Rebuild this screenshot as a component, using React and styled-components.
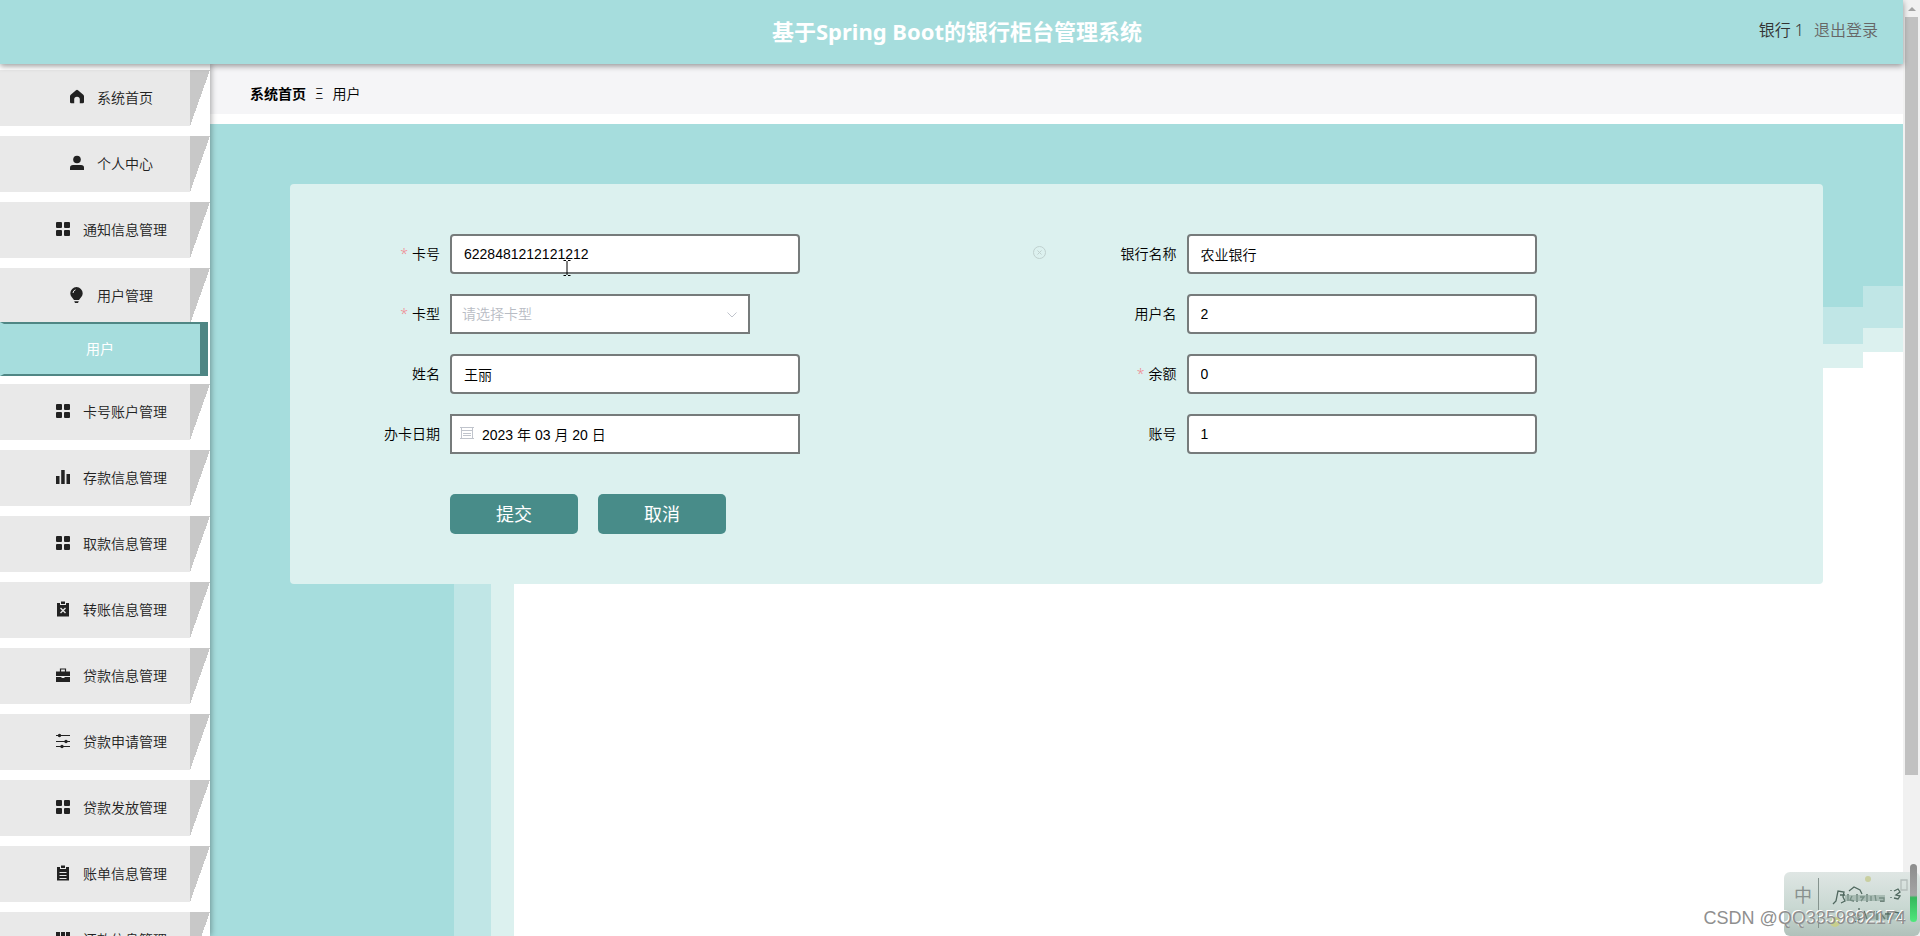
import React from 'react'
import styled, { createGlobalStyle, css } from 'styled-components'

const TEAL = '#a6dddd'
const TEAL_MID = '#c0e6e6'
const TEAL_LIGHT = '#dcf1ef'

const GlobalStyle = createGlobalStyle`
  * {
    box-sizing: border-box;
  }
  body {
    margin: 0;
    background: #fff;
    color: #000;
    font-family: "Noto Sans", "Noto Sans CJK SC", sans-serif;
    font-size: 14px;
    font-weight: 350;
  }
`;

const Screen = styled.div`
  position: relative;
  display: flex;
  height: 100vh;
  overflow: hidden;
`;

const Page = styled.div`
  flex: 1;
  min-width: 0;
  display: flex;
  flex-direction: column;
`;

const Header = styled.header`
  position: relative;
  z-index: 2;
  flex: none;
  height: 64px;
  padding: 0 25px 0 36px;
  display: grid;
  grid-template-columns: 1fr auto 1fr;
  align-items: center;
  background: ${TEAL};
  box-shadow: 0 2px 6px rgba(0, 0, 0, 0.4);
`;

const Title = styled.h1`
  grid-column: 2;
  margin: 0;
  color: #fff;
  font-size: 22px;
  line-height: 62px;
  height: 64px;
  font-weight: bold;
`;

const Account = styled.div`
  display: flex;
  justify-content: flex-end;
  gap: 10px;
  font-size: 16px;
  line-height: 60px;
  height: 64px;
  color: #333;
`;

const Logout = styled.a`
  color: #666;
  text-decoration: none;
`;

const Body = styled.div`
  flex: 1;
  min-height: 0;
  display: flex;
`;

const Sidebar = styled.nav`
  position: relative;
  z-index: 1;
  flex: none;
  width: 210px;
  padding-top: 6px;
  background: #fff;
  box-shadow: 1px 0 6px rgba(0, 0, 0, 0.35);
`;

const MenuList = styled.ul`
  margin: 0;
  padding: 0;
  list-style: none;
  display: flex;
  flex-direction: column;
  gap: 10px;
`;

const MenuLink = styled.a`
  display: flex;
  align-items: center;
  justify-content: center;
  gap: 13px;
  height: 56px;
  padding: 0 0 2px 13px;
  color: #222;
  text-decoration: none;
  background:
    linear-gradient(to bottom right, #c8c8c8 50%, #fff 50%) right / 20px 100% no-repeat,
    #e9e9e9;
`;

const SubLink = styled.a`
  display: block;
  width: 208px;
  height: 54px;
  margin: -2px 0 -2px;
  padding-right: 4px;
  border: 2px solid #4f8684;
  border-right-width: 8px;
  border-left: 4px solid ${TEAL};
  background: ${TEAL};
  color: #fff;
  font-weight: 400;
  line-height: 50px;
  text-align: center;
  text-decoration: none;
`;

const Main = styled.main`
  flex: 1;
  min-width: 0;
  display: flex;
  flex-direction: column;
`;

const Breadcrumb = styled.div`
  flex: none;
  display: flex;
  align-items: center;
  gap: 9px;
  height: 50px;
  margin-bottom: 10px;
  padding: 8px 40px 0;
  background: #f5f5f7;
`;

const Current = styled.b`
  font-weight: 600;
`;

const steps = (a, b, c) => css`linear-gradient(to bottom, ${TEAL} ${a}px, ${TEAL_MID} ${a}px ${b}px, ${TEAL_LIGHT} ${b}px ${c}px, #fff ${c}px)`

const Content = styled.div`
  flex: 1;
  padding: 60px 80px;
  background:
    ${steps(162, 204, 228)} right top / 40px 100% no-repeat,
    ${steps(183, 220, 244)} right 40px top / 40px 100% no-repeat,
    linear-gradient(${TEAL}, ${TEAL}) left top / 100% 80px no-repeat,
    linear-gradient(to right, ${TEAL} 244px, ${TEAL_MID} 244px 281px, ${TEAL_LIGHT} 281px 304px, #fff 304px);
`;

const Form = styled.form`
  padding: 50px 30px;
  border-radius: 4px;
  background: ${TEAL_LIGHT};
`;

const Fields = styled.div`
  display: grid;
  grid-template-columns: 1fr 1fr;
  row-gap: 20px;
`;

const Field = styled.div`
  display: flex;
  align-items: center;
  height: 40px;
`;

const Label = styled.label`
  flex: none;
  width: 130px;
  padding-right: 10px;
  text-align: right;
  line-height: 40px;
`;

const Star = styled.span`
  color: #f08a90;
  margin-right: 4px;
`;

const Control = styled.div`
  position: relative;
  flex: 1;
  height: 40px;
`;

const boxStyle = css`
  height: 40px;
  border: 2px solid #767b7b;
  background: #fff;
  color: #000;
  font-family: "Liberation Sans", "Noto Sans CJK SC", sans-serif;
  font-size: 14px;
  font-weight: inherit;
  outline: none;
`;

const Input = styled.input`
  ${boxStyle}
  width: 350px;
  padding: 0 12px;
  border-radius: 4px;
  ${props => props.$date && 'padding-left: 30px; border-radius: 0;'}
`;

const Select = styled.select`
  ${boxStyle}
  width: 300px;
  padding: 0 10px;
  border-radius: 0;
  appearance: none;
  color: #b8bcc4;
`;

const IconSpot = styled.span`
  position: absolute;
  top: 12px;
  left: ${props => props.$left};
  right: ${props => props.$right};
  display: flex;
  color: #c0c4cc;
  pointer-events: none;
`;

const Buttons = styled.div`
  display: flex;
  gap: 20px;
  margin-top: 40px;
  padding-left: 130px;
`;

const Button = styled.button`
  width: 128px;
  height: 40px;
  padding: 0 0 2px;
  border: none;
  border-radius: 5px;
  background: #488c89;
  color: #fff;
  font-family: inherit;
  font-size: 18px;
  font-weight: 400;
`;

const Scrollbar = styled.div`
  flex: none;
  width: 17px;
  padding: 0 2px;
  background: #f1f1f1;
`;

const ScrollArrow = styled.div`
  display: flex;
  align-items: center;
  justify-content: center;
  height: 17px;
`;

const Thumb = styled.div`
  height: 81%;
  background: #c1c1c1;
`;

const TextCursor = styled.svg`
  position: absolute;
  left: 113px;
  top: 26px;
`;

const InputMethod = styled.div`
  position: absolute;
  z-index: 3;
  right: 0;
  bottom: 0;
  width: 136px;
  height: 64px;
  padding: 6px 0 8px 10px;
  display: flex;
  border-radius: 6px;
  background: linear-gradient(#dfe6e4, #c9d8d2 55%, #b0c1ba);
`;

const Mode = styled.span`
  width: 25px;
  padding-top: 6px;
  border-right: 1px solid #85938e;
  color: #87908d;
  font-size: 18px;
  font-weight: 400;
  line-height: 22px;
`;

const Doodle = styled.svg`
  margin-left: 12px;
  overflow: visible;
`;

const Level = styled.div`
  position: absolute;
  z-index: 5;
  right: 3px;
  bottom: 14px;
  width: 7px;
  height: 58px;
  border-radius: 4px;
  background: linear-gradient(#8c8c8c, #a5a5a5 54%, #36b85c 58%, #4fe87c);
`;

const Watermark = styled.div`
  position: absolute;
  z-index: 4;
  right: 14px;
  bottom: 7px;
  font-family: "Liberation Sans", sans-serif;
  font-size: 18px;
  line-height: 22px;
  color: #8f8f8f;
  text-shadow: -1px -1px 0 #fff;
`;

const ICONS = {
  home: <path d="M7-.2Q7.500-.2 8 .2l5.300 4.500Q14 5.300 14 6.300V12q0 1.300-1.300 1.300H9.800V9.500a2.800 2.800 0 0 0-5.600 0v3.800H1.300Q0 13.300 0 12V6.300Q0 5.300.7 4.700L6 .2Q6.500-.2 7-.2z" />,
  user: <><circle cx="7" cy="3.500" r="3.800" /><path d="M0 14v-2.500Q0 9 3 9h8q3 0 3 2.500V14z" /></>,
  grid: <><rect width="6" height="6" rx="1" /><rect x="8" width="6" height="6" rx="1" /><rect y="8" width="6" height="6" rx="1" /><rect x="8" y="8" width="6" height="6" rx="1" /></>,
  bulb: <><path d="M6.500-1A6.300 6.300 0 0 0 .3 5.300c0 3 2 4 3.700 6.700h5c1.700-2.700 3.700-3.700 3.700-6.700A6.300 6.300 0 0 0 6.500-1z" /><path d="M4.200 13.200h4.600L8 15H5z" /><path d="M3 5q.2-2.500 2.500-3.200" fill="none" stroke="#e9e9e9" /></>,
  bars: <><rect y="6" width="3.500" height="8" /><rect x="5.200" width="3.500" height="14" /><rect x="10.500" y="4" width="3.500" height="10" /></>,
  fail: <><path d="M1 1h3v2h6V1h3v13.500H1z" /><path d="M5-.5h4V2H5z" /><path d="m4.500 6 5 5m0-5-5 5" stroke="#e9e9e9" strokeWidth="1.400" /></>,
  bag: <><path d="M4.500 4V1h5v3" fill="none" stroke="currentColor" strokeWidth="1.200" /><path d="M0 3.500h14V8H0zM0 9h5.500v1h3V9H14v5H0z" /></>,
  sliders: <><path d="M0 1.500h14M0 7.500h14M0 12.500h14" stroke="currentColor" /><circle cx="3.500" cy="1.500" r="1.700" /><circle cx="10" cy="7.500" r="1.700" /><circle cx="6" cy="12.500" r="1.700" /></>,
  order: <><path d="M1 1h3v2h6V1h3v13.500H1z" /><path d="M5-.5h4V2H5z" /><path d="M3.500 6.500h7M3.500 9.500h7M3.500 12.500h7" stroke="#e9e9e9" /></>,
  tabs: <path d="M0 0h4v14H0zM5 0h4v14H5zM10 0h4v14h-4z" />,
}

const Icon = ({ name }) => (
  <svg width="14" height="14" viewBox="0 0 14 14" fill="currentColor" overflow="visible" aria-hidden="true">{ICONS[name]}</svg>
)

const menu = [
  { icon: 'home', text: '系统首页' },
  { icon: 'user', text: '个人中心' },
  { icon: 'grid', text: '通知信息管理' },
  { icon: 'bulb', text: '用户管理', sub: '用户' },
  { icon: 'grid', text: '卡号账户管理' },
  { icon: 'bars', text: '存款信息管理' },
  { icon: 'grid', text: '取款信息管理' },
  { icon: 'fail', text: '转账信息管理' },
  { icon: 'bag', text: '贷款信息管理' },
  { icon: 'sliders', text: '贷款申请管理' },
  { icon: 'grid', text: '贷款发放管理' },
  { icon: 'order', text: '账单信息管理' },
  { icon: 'tabs', text: '还款信息管理' },
]

const TextField = ({ id, label, value, required, date, children }) => (
  <Field>
    <Label htmlFor={id}>{required && <Star>*</Star>}{label}</Label>
    <Control>
      <Input id={id} defaultValue={value} $date={date} />
      {children}
    </Control>
  </Field>
)

const App = () => {
  return (
    <Screen>
      <GlobalStyle />
      <Page>
        <Header>
          <Title>基于Spring Boot的银行柜台管理系统</Title>
          <Account>
            <span>银行 1</span>
            <Logout href="#logout">退出登录</Logout>
          </Account>
        </Header>
        <Body>
          <Sidebar>
            <MenuList>
              {menu.map((item) => (
                <li key={item.text}>
                  <MenuLink href="#menu"><Icon name={item.icon} />{item.text}</MenuLink>
                  {item.sub && <SubLink href="#user">{item.sub}</SubLink>}
                </li>
              ))}
            </MenuList>
          </Sidebar>
          <Main>
            <Breadcrumb>
              <Current>系统首页</Current>
              <span>Ξ</span>
              <span>用户</span>
            </Breadcrumb>
            <Content>
              <Form onSubmit={(e) => e.preventDefault()}>
                <Fields>
                  <TextField id="kahao" label="卡号" value="6228481212121212" required>
                    <TextCursor width="8" height="16" viewBox="0 0 8 16" fill="none" stroke="#000">
                      <path d="M.5.500h2.500M5 .5h2.500M4 1v14M.5 15.500H3M5 15.500h2.500" />
                    </TextCursor>
                    <IconSpot $right="10px">
                      <svg width="15" height="15" viewBox="0 0 15 15" fill="none" stroke="#bfd0ce">
                        <circle cx="7.500" cy="6.500" r="6" />
                        <path d="m5.500 4.500 4 4m0-4-4 4" />
                      </svg>
                    </IconSpot>
                  </TextField>
                  <TextField id="yinhang" label="银行名称" value="农业银行" />
                  <Field>
                    <Label htmlFor="kaxing"><Star>*</Star>卡型</Label>
                    <Control>
                      <Select id="kaxing"><option>请选择卡型</option></Select>
                      <IconSpot $left="275px">
                        <svg width="14" height="16" viewBox="0 0 14 16" fill="none" stroke="currentColor">
                          <path d="m2.500 6.500 4.500 4.500 4.500-4.500" />
                        </svg>
                      </IconSpot>
                    </Control>
                  </Field>
                  <TextField id="yonghuming" label="用户名" value="2" />
                  <TextField id="xingming" label="姓名" value="王丽" />
                  <TextField id="yue" label="余额" value="0" required />
                  <TextField id="riqi" label="办卡日期" value="2023 年 03 月 20 日" date>
                    <IconSpot $left="10px">
                      <svg width="14" height="14" viewBox="0 0 14 14" fill="none" stroke="currentColor">
                        <path d="M1.500 1.500h11v11h-11zM0 1.500h14M1.500 4.500h11M3 7.500h8M3 9.500h8M0 12.500h14" />
                      </svg>
                    </IconSpot>
                  </TextField>
                  <TextField id="zhanghao" label="账号" value="1" />
                </Fields>
                <Buttons>
                  <Button type="submit">提交</Button>
                  <Button type="button">取消</Button>
                </Buttons>
              </Form>
            </Content>
          </Main>
        </Body>
      </Page>
      <Scrollbar aria-hidden="true">
        <ScrollArrow>
          <svg width="8" height="4" viewBox="0 0 8 4" fill="#a3a3a3"><path d="M4 0 8 4H0z" /></svg>
        </ScrollArrow>
        <Thumb />
      </Scrollbar>
      <InputMethod>
        <Mode>中</Mode>
        <Doodle width="80" height="50" viewBox="0 0 80 50" fill="none" stroke="#50685f" strokeWidth="1.300" aria-hidden="true">
          <circle cx="37" cy="1" r="3" fill="#c9cfa0" stroke="none" />
          <circle cx="4" cy="44" r="5" fill="#c8cf8c" stroke="none" />
          <path d="M2 26l3-3 2-10 6 1-1 5 2 4-4 2M9 17h5M18 13l5-4 6 3 2 4M17 16v7M21 18l-2 4 4 1M26 16v8M29 19h4l-3 4M36 16v8M40 18v5M44 17l1 6M48 20h5v3h-4M60 12v1M60 19v1M63 13l4-2 2 3-4 3 4 1-2 3-4-1" />
          <path d="M14 20h40" stroke="#8fa69c" strokeWidth="6" opacity=".6" />
          <path d="M22 38l4-3 3 6-5 3M28 30v2M33 33l3 8M38 34h5l-3 7M46 33v9M50 36l4 5M57 32v10M54 36h6M63 34l5 1-3 6M70 33v9" />
          <path d="M24 39h46" stroke="#7d968b" strokeWidth="5" opacity=".5" />
          <path d="M70 2h6v10h-6z" stroke="#b4bdba" />
        </Doodle>
      </InputMethod>
      <Watermark>CSDN @QQ3359892174</Watermark>
      <Level />
    </Screen>
  )
}

export default App
